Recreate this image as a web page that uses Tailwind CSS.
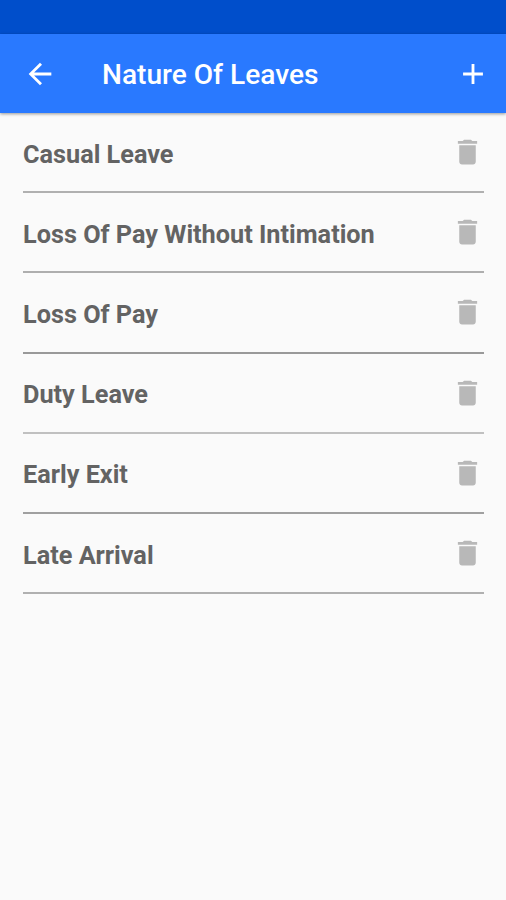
<!DOCTYPE html>
<html lang="en">
<head>
  <meta charset="UTF-8" />
  <meta name="viewport" content="width=device-width, initial-scale=1.0"/>
  <title>Nature Of Leaves</title>
  <script src="https://cdn.jsdelivr.net/npm/@tailwindcss/browser@4"></script>
</head>
<body class="bg-[#fafafa] min-h-screen font-['Roboto',sans-serif]">

  <div class="h-[34px] bg-[#004ecb]"></div>
  <header class="h-[79px] bg-[#2979ff] text-white flex items-center pl-[23px] pr-4 shadow-[0_1px_3px_rgba(0,0,0,0.4)]">
    <svg class="w-[34px] h-[34px]" viewBox="0 0 24 24" fill="currentColor"><path d="M20 11H7.83l5.59-5.59L12 4l-8 8 8 8 1.41-1.41L7.83 13H20v-2z"/></svg>
    <h1 class="ml-[45px] flex-1 pt-[2px] text-[28.1px] leading-8 font-medium">Nature Of Leaves</h1>
    <svg class="w-[34px] h-[34px]" viewBox="0 0 24 24" fill="currentColor"><path d="M19 13h-6v6h-2v-6H5v-2h6V5h2v6h6v2z"/></svg>
  </header>

  <ul id="leaves" class="pl-[23px] pr-[22px]"></ul>

<script>
  // name and divider colour of each row
  const leaves = [
    ["Casual Leave", "border-[#b0b0b0]"],
    ["Loss Of Pay Without Intimation", "border-[#aeaeae]"],
    ["Loss Of Pay", "border-[#999999]"],
    ["Duty Leave", "border-[#c0c0c0]"],
    ["Early Exit", "border-[#a0a0a0]"],
    ["Late Arrival", "border-[#b0b0b0]"]
  ];

  document.getElementById("leaves").innerHTML = leaves.map(([name, border]) => `
    <li class="h-[80.2px] flex items-center justify-between border-b-2 ${border} text-[#636363]">
      <span class="pt-[5px] text-[25.25px] leading-8 font-bold">${name}</span>
      <svg class="w-[33px] h-[34px] text-[#b8b8b8]" viewBox="0 0 24 24" fill="currentColor"><path d="M6 19c0 1.1.9 2 2 2h8c1.1 0 2-.9 2-2V7H6v12zM19 4h-3.5l-1-1h-5l-1 1H5v2h14V4z"/></svg>
    </li>`).join("");
</script>

</body>
</html>
